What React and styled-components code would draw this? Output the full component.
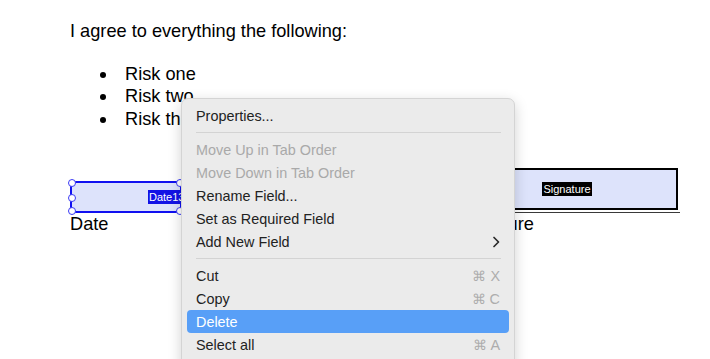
import styled, { createGlobalStyle } from "styled-components"

const Global = createGlobalStyle`
    body {
        margin: 0;
        background: #fff;
        font-family: "Liberation Sans", Arial, sans-serif;
    }
`

const menuItems = [
    { label: "Properties..." },
    { sep: true },
    { label: "Move Up in Tab Order", disabled: true },
    { label: "Move Down in Tab Order", disabled: true },
    { label: "Rename Field..." },
    { label: "Set as Required Field" },
    { label: "Add New Field", sub: true },
    { sep: true },
    { label: "Cut", key: "X" },
    { label: "Copy", key: "C" },
    { label: "Delete", active: true },
    { label: "Select all", key: "A" },
]

const risks = ["Risk one", "Risk two", "Risk three"]

export default function App() {
    return (<>
        <Global />
        <Page>
            <Doc>
                <Heading>I agree to everything the following:</Heading>
                <List>
                    {risks.map(r => (
                        <ListItem key={r}>
                            <Bullet />
                            <span>{r}</span>
                        </ListItem>
                    ))}
                </List>

                <Fields>
                    <FieldColumn>
                        <DateBox>
                            <FieldName $dark={false}>Date13_</FieldName>
                            <Handle style={{ left: -4, top: -4 }} />
                            <Handle style={{ left: -4, top: 11 }} />
                            <Handle style={{ left: -4, bottom: -4 }} />
                            <Handle style={{ right: -4, top: -4 }} />
                            <Handle style={{ right: -4, bottom: -4 }} />
                        </DateBox>
                        <Label>Date</Label>
                    </FieldColumn>

                    <FieldColumn>
                        <SigLine>
                            <SigBox>
                                <FieldName $dark>Signature</FieldName>
                            </SigBox>
                        </SigLine>
                        <Label>Signature</Label>
                    </FieldColumn>
                </Fields>
            </Doc>

            <Menu>
                {menuItems.map((it, i) => it.sep ? <Separator key={i} /> : (
                    <Item key={i} $disabled={it.disabled} $active={it.active}>
                        <span>{it.label}</span>
                        {it.key && <Shortcut>⌘ {it.key}</Shortcut>}
                        {it.sub && (
                            <svg width="8" height="12" viewBox="0 0 8 12">
                                <path d="M2 1.5 L6.5 6 L2 10.5" fill="none" stroke="#2a2a2a" strokeWidth="1.7" strokeLinecap="round" strokeLinejoin="round" />
                            </svg>
                        )}
                    </Item>
                ))}
            </Menu>
        </Page>
    </>)
}

const Page = styled.div`
    position: relative;
    width: 710px;
    height: 359px;
    overflow: hidden;
    background: #fff;
`

const Doc = styled.div`
    padding: 21px 0 0 70px;
    color: #000;
    font-size: 18.2px;
`

const Heading = styled.div`
    line-height: 21px;
`

const List = styled.div`
    margin-top: 21px;
`

const ListItem = styled.div`
    display: flex;
    align-items: center;
    height: 22.5px;
`

const Bullet = styled.span`
    width: 6px;
    height: 6px;
    border-radius: 50%;
    background: #000;
    margin: 1px 19px 0 30px;
`

const Fields = styled.div`
    display: flex;
    gap: 274px;
    margin-top: 37px;
`

const FieldColumn = styled.div`
    display: flex;
    flex-direction: column;
    justify-content: flex-end;
`

const DateBox = styled.div`
    position: relative;
    box-sizing: border-box;
    width: 112px;
    height: 32px;
    border: 2px solid #1010f0;
    background: #dde3fb;
    display: flex;
    align-items: center;
    padding-left: 76px;
`

const Handle = styled.span`
    position: absolute;
    width: 6px;
    height: 6px;
    border-radius: 50%;
    background: #fff;
    border: 1px solid #3a3af5;
`

const FieldName = styled.span`
    font-size: 11px;
    line-height: 14px;
    padding: 0 1px;
    white-space: nowrap;
    color: #fff;
    background: ${p => p.$dark ? "#000" : "#1212e6"};
`

const SigLine = styled.div`
    width: 224px;
    padding-bottom: 2px;
    border-bottom: 1px solid #3a3a3a;
`

const SigBox = styled.div`
    box-sizing: border-box;
    width: 222px;
    height: 42px;
    border: 2px solid #000;
    background: #dde3fb;
    display: flex;
    align-items: center;
    justify-content: center;
`

const Label = styled.div`
    line-height: 21px;
    padding-top: 1px;
`

const Menu = styled.div`
    position: absolute;
    left: 181px;
    top: 98px;
    width: 334px;
    height: 290px;
    box-sizing: border-box;
    padding-top: 5px;
    background: #ebebeb;
    border: 1px solid #d4d4d4;
    border-radius: 7px;
    box-shadow: 0 4px 14px rgba(0, 0, 0, 0.18);
    font-size: 14.4px;
`

const Item = styled.div`
    display: flex;
    align-items: center;
    justify-content: space-between;
    height: 23px;
    margin: 0 5px 0 5px;
    padding: 0 9px 0 9px;
    border-radius: 4px;
    color: ${p => p.$active ? "#fff" : p.$disabled ? "#a9a9a9" : "#222"};
    background: ${p => p.$active ? "#589ff7" : "transparent"};
`

const Shortcut = styled.span`
    color: #adadad;
`

const Separator = styled.div`
    height: 1px;
    margin: 5px 13px 5px 14px;
    background: #d3d3d3;
`
